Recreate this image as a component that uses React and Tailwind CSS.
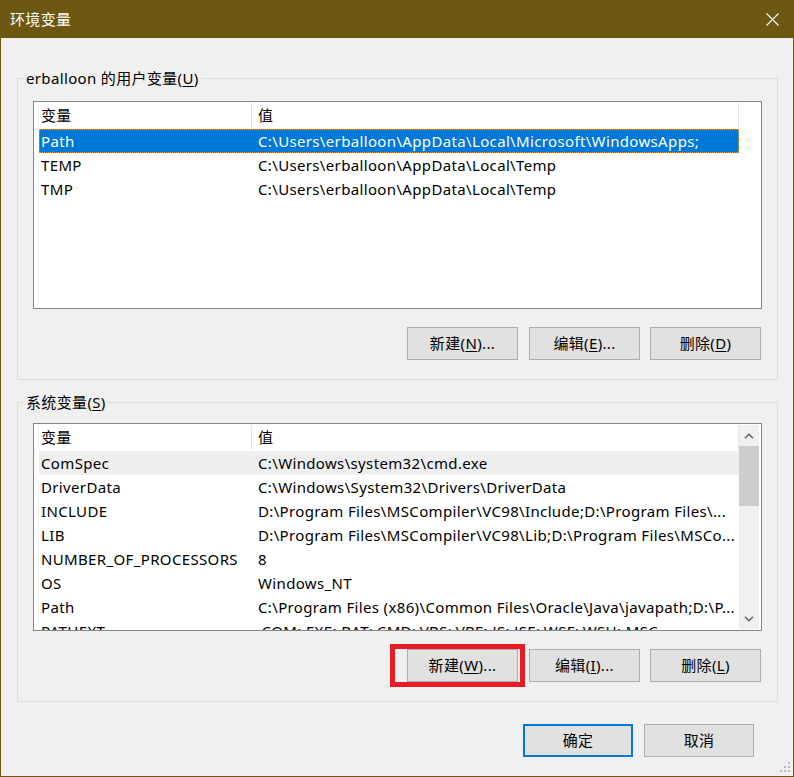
import React from 'react';

const userVars = [
  ['Path', 'C:\\Users\\erballoon\\AppData\\Local\\Microsoft\\WindowsApps;'],
  ['TEMP', 'C:\\Users\\erballoon\\AppData\\Local\\Temp'],
  ['TMP', 'C:\\Users\\erballoon\\AppData\\Local\\Temp'],
];

const systemVars = [
  ['ComSpec', 'C:\\Windows\\system32\\cmd.exe'],
  ['DriverData', 'C:\\Windows\\System32\\Drivers\\DriverData'],
  ['INCLUDE', 'D:\\Program Files\\MSCompiler\\VC98\\Include;D:\\Program Files\\...'],
  ['LIB', 'D:\\Program Files\\MSCompiler\\VC98\\Lib;D:\\Program Files\\MSCo...'],
  ['NUMBER_OF_PROCESSORS', '8'],
  ['OS', 'Windows_NT'],
  ['Path', 'C:\\Program Files (x86)\\Common Files\\Oracle\\Java\\javapath;D:\\P...'],
  ['PATHEXT', '.COM;.EXE;.BAT;.CMD;.VBS;.VBE;.JS;.JSE;.WSF;.WSH;.MSC'],
];

function Mnemonic({ label, keyChar, dots }) {
  return (
    <span>
      {label}(<span className="underline underline-offset-2">{keyChar}</span>){dots ? '...' : ''}
    </span>
  );
}

function WinButton({ children, className = '', primary = false }) {
  return (
    <button
      type="button"
      className={
        'h-[33px] flex items-center justify-center bg-[#e1e1e1] text-black ' +
        (primary ? 'border-2 border-[#0078d7] ' : 'border border-[#adadad] ') +
        className
      }
    >
      {children}
    </button>
  );
}

function Chevron({ up }) {
  return (
    <svg width="10" height="6" viewBox="0 0 10 6">
      <polyline
        points={up ? '1,5.2 5,1.2 9,5.2' : '1,0.8 5,4.8 9,0.8'}
        fill="none"
        stroke="#606060"
        strokeWidth="1.5"
      />
    </svg>
  );
}

function VarList({ rows, selected, hovered, scroll }) {
  return (
    <div className="h-[208px] border border-[#828790] bg-white flex overflow-hidden">
      <div className="w-[705px] pl-[5px] shrink-0">
        {/* header */}
        <div className="flex h-[27px]">
          <div className="w-[213px] pl-[2px] flex items-center border-r border-[#e5e5e5] my-[1px]">变量</div>
          <div className="w-[487px] pl-[6px] flex items-center border-r border-[#e5e5e5] my-[1px]">值</div>
        </div>
        {rows.map(([name, value], i) => (
          <div
            key={i}
            className={
              'flex h-[24px] w-[700px] items-center whitespace-nowrap ' +
              (i === selected
                ? 'bg-[#0078d7] text-white outline-1 outline-dotted -outline-offset-1 outline-[#f39c38]'
                : i === hovered
                ? 'bg-[#efefef]'
                : '')
            }
          >
            <div className="w-[213px] pl-[2px] overflow-hidden">{name}</div>
            <div className="w-[487px] pl-[6px] overflow-hidden">{value}</div>
          </div>
        ))}
      </div>
      {scroll && (
        <div className="w-[20px] my-[1px] flex flex-col bg-[#f0f0f0]">
          <div className="h-[21px] flex items-center justify-center">
            <Chevron up />
          </div>
          <div className="h-[60px] bg-[#cdcdcd]" />
          <div className="flex-1" />
          <div className="h-[21px] flex items-center justify-center">
            <Chevron />
          </div>
        </div>
      )}
    </div>
  );
}

function Group({ legend, rows, selected, hovered, scroll, buttons, pt, gap, pb, annotate }) {
  return (
    <fieldset className="border border-[#dcdcdc]">
      <legend className="ml-[6px] px-[2px] leading-[20px]">{legend}</legend>
      <div className={'px-[15px] ' + pt + ' ' + pb}>
        <VarList rows={rows} selected={selected} hovered={hovered} scroll={scroll} />
        <div className={'flex justify-end pr-[1px] ' + gap}>
          <div className="relative">
            <WinButton className="w-[111px]">{buttons[0]}</WinButton>
            {annotate && (
              <div className="absolute left-[-17px] top-[-5px] w-[135px] h-[43px] border-[5px] border-[#e81c24]" />
            )}
          </div>
          <WinButton className="w-[111px] ml-[11px]">{buttons[1]}</WinButton>
          <WinButton className="w-[111px] ml-[10px]">{buttons[2]}</WinButton>
        </div>
      </div>
    </fieldset>
  );
}

export default function App() {
  return (
    <div className="relative w-[794px] h-[777px] bg-[#f0f0f0] border border-t-0 border-[#6c5810] flex flex-col text-[15px] tracking-[0.35px] text-black font-['Segoe_UI','Noto_Sans','Noto_Sans_CJK_SC',sans-serif]">
      {/* title bar */}
      <div className="h-[38px] shrink-0 bg-[#6c5810] flex items-center pl-[9px] pr-[14px] text-white">
        <span className="font-['Noto_Sans_CJK_SC',sans-serif]">环境变量</span>
        <svg className="ml-auto" width="13" height="13" viewBox="0 0 13 13">
          <path d="M0.5 0.5 L12.5 12.5 M12.5 0.5 L0.5 12.5" stroke="#ffffff" strokeWidth="1.1" />
        </svg>
      </div>

      <div className="flex-1 flex flex-col pl-[16px] pr-[15px] pt-[30px]">
        <Group
          legend={<Mnemonic label="erballoon 的用户变量" keyChar="U" />}
          rows={userVars}
          selected={0}
          hovered={-1}
          scroll={false}
          pt="pt-[13px]"
          gap="mt-[18px]"
          pb="pb-[19px]"
          buttons={[
            <Mnemonic key="n" label="新建" keyChar="N" dots />,
            <Mnemonic key="e" label="编辑" keyChar="E" dots />,
            <Mnemonic key="d" label="删除" keyChar="D" />,
          ]}
        />
        <div className="h-[12px]" />
        <Group
          legend={<Mnemonic label="系统变量" keyChar="S" />}
          rows={systemVars}
          selected={-1}
          hovered={0}
          scroll
          pt="pt-[11px]"
          gap="mt-[18px]"
          pb="pb-[19px]"
          annotate
          buttons={[
            <Mnemonic key="w" label="新建" keyChar="W" dots />,
            <Mnemonic key="i" label="编辑" keyChar="I" dots />,
            <Mnemonic key="l" label="删除" keyChar="L" />,
          ]}
        />
        <div className="flex justify-end mt-[22px] mr-[24px]">
          <WinButton primary className="w-[110px]">确定</WinButton>
          <WinButton className="w-[110px] ml-[11px]">取消</WinButton>
        </div>
      </div>

      {/* resize grip */}
      <svg className="absolute right-[2px] bottom-[2px]" width="13" height="13" viewBox="0 0 13 13">
        <rect x="10" y="1" width="2" height="2" fill="#b8b8b8" />
        <rect x="6" y="5" width="2" height="2" fill="#b8b8b8" />
        <rect x="10" y="5" width="2" height="2" fill="#b8b8b8" />
        <rect x="2" y="9" width="2" height="2" fill="#b8b8b8" />
        <rect x="6" y="9" width="2" height="2" fill="#b8b8b8" />
        <rect x="10" y="9" width="2" height="2" fill="#b8b8b8" />
      </svg>
    </div>
  );
}
